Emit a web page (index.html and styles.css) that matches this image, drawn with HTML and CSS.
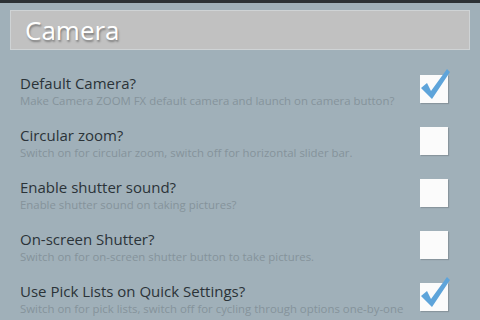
FILE: index.html
```html
<!DOCTYPE html>
<html lang="en">

<head>
    <meta http-equiv="Content-Type" content="text/html; charset=UTF-8">
    <meta name="viewport" content="width=device-width, initial-scale=1.0">
    <link rel="stylesheet" href="styles.css">
</head>

<body>
    <div class="topbar"></div>
    <div class="header">
        <div class="header-title">Camera</div>
    </div>

    <div class="pref">
        <div class="pref-text">
            <div class="pref-title">Default Camera?</div>
            <div class="pref-summary">Make Camera ZOOM FX default camera and launch on camera button?</div>
        </div>
        <div class="check on">
            <svg viewBox="0 0 34 34" width="34" height="34"><path d="M4 20 L10 15 L14 23 L30 1 L33 4 L15 31 Z" fill="#5ea4da"/></svg>
        </div>
    </div>

    <div class="pref">
        <div class="pref-text">
            <div class="pref-title">Circular zoom?</div>
            <div class="pref-summary">Switch on for circular zoom, switch off for horizontal slider bar.</div>
        </div>
        <div class="check"></div>
    </div>

    <div class="pref">
        <div class="pref-text">
            <div class="pref-title">Enable shutter sound?</div>
            <div class="pref-summary">Enable shutter sound on taking pictures?</div>
        </div>
        <div class="check"></div>
    </div>

    <div class="pref">
        <div class="pref-text">
            <div class="pref-title">On-screen Shutter?</div>
            <div class="pref-summary">Switch on for on-screen shutter button to take pictures.</div>
        </div>
        <div class="check"></div>
    </div>

    <div class="pref">
        <div class="pref-text">
            <div class="pref-title">Use Pick Lists on Quick Settings?</div>
            <div class="pref-summary">Switch on for pick lists, switch off for cycling through options one-by-one</div>
        </div>
        <div class="check on">
            <svg viewBox="0 0 34 34" width="34" height="34"><path d="M4 20 L10 15 L14 23 L30 1 L33 4 L15 31 Z" fill="#5ea4da"/></svg>
        </div>
    </div>
</body>

</html>
```

FILE: styles.css
```css
body {
    margin: 0;
    background: #a0b0b9;
    font-family: "Open Sans", "DejaVu Sans", sans-serif;
    width: 480px;
    height: 320px;
    overflow: hidden;
}

.topbar {
    height: 3px;
    background: #2c3236;
}

.header {
    margin: 7px 10px 13px 10px;
    height: 40px;
    background: #c1c1c1;
    border: 1px solid #cfd3d5;
    box-sizing: border-box;
    display: flex;
    align-items: center;
    padding-left: 14px;
}

.header-title {
    color: #ffffff;
    font-size: 26px;
    text-shadow: 1px 2px 2px rgba(0, 0, 0, 0.35);
}

.pref {
    height: 52px;
    display: flex;
    align-items: center;
    padding: 0 32px 0 20px;
}

.pref-text {
    flex: 1;
    padding-top: 3px;
}

.pref-title {
    font-size: 15px;
    color: #2b3338;
    line-height: 20px;
}

.pref-summary {
    font-size: 11.4px;
    color: #85939b;
    line-height: 16px;
    white-space: nowrap;
}

.check {
    position: relative;
    width: 28px;
    height: 28px;
    background: #fbfbfb;
    box-shadow: 1px 1px 1px rgba(0, 0, 0, 0.15);
}

.check svg {
    position: absolute;
    left: -3px;
    top: -7px;
}
```
